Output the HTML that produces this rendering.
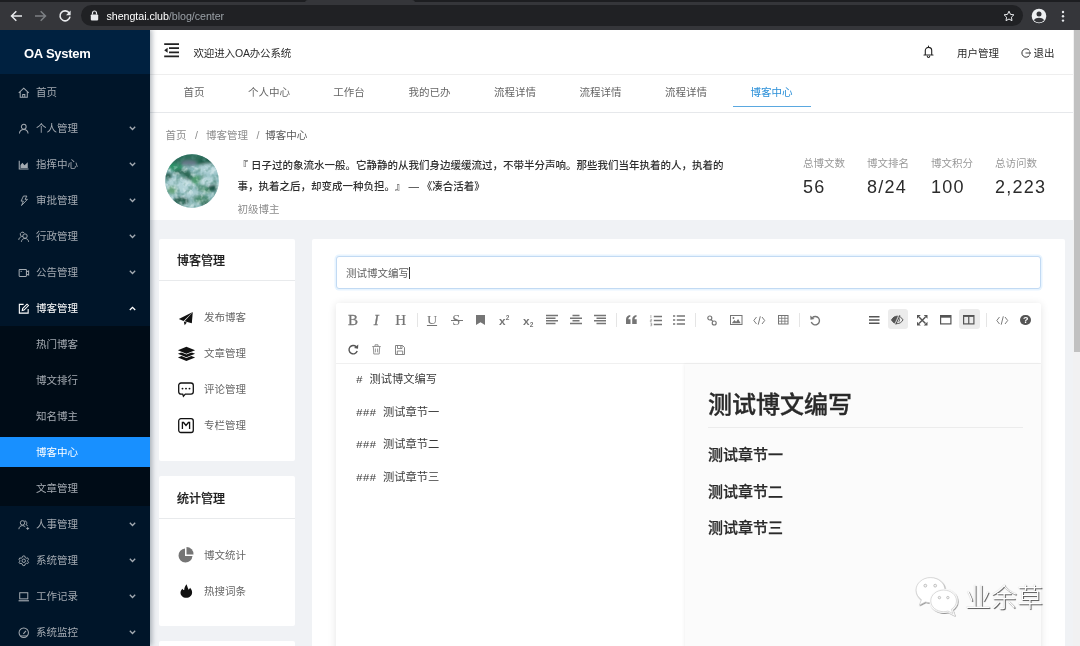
<!DOCTYPE html>
<html lang="zh-CN">
<head>
<meta charset="utf-8">
<title>OA System</title>
<style>
*{box-sizing:border-box;margin:0;padding:0}
html,body{width:1080px;height:646px;overflow:hidden;background:#f0f2f5}
body{font-family:"Liberation Sans","Noto Sans CJK SC",sans-serif;font-size:10.5px;color:#333;position:relative;text-spacing-trim:space-all}
#wrap{position:absolute;left:0;top:0;width:1080px;height:646px;overflow:hidden;will-change:transform}
.t{position:absolute;white-space:nowrap;line-height:16px;height:16px}
svg{position:absolute;overflow:visible}
#chrome{position:absolute;left:0;top:0;width:1080px;height:29.5px;z-index:20;background:#35363a}
#chrome .strip{position:absolute;left:0;top:0;width:1080px;height:2px;background:#1d1e21}
#urlbar{position:absolute;left:81px;top:5px;width:942px;height:21.2px;border-radius:10.6px;background:#202124}
#side{position:absolute;left:0;top:29px;width:150px;height:617px;background:#001529;box-shadow:2px 0 5px rgba(0,21,41,.3);z-index:5}
#logo{position:absolute;left:0;top:0;width:150px;height:45px;background:#002140}
#logo span{position:absolute;left:24px;top:15.8px;color:#fff;font-size:13px;font-weight:bold;line-height:18px;letter-spacing:-0.25px}
.mi{position:absolute;left:0;width:150px;height:36px;color:#a4abb2;line-height:36px}
.mi .lbl{position:absolute;left:36px;top:0.3px;white-space:nowrap}
.mi.on{color:#fff}
.sub{position:absolute;left:0;width:150px;background:#000c17}
.sel{position:absolute;left:0;width:150px;height:30px;background:#1890ff}
#head{position:absolute;left:150px;top:29px;width:923px;height:45px;background:#fff}
#tabs{position:absolute;left:150px;top:74px;width:923px;height:39px;background:#fff;border-top:1px solid #eeeeee;border-bottom:1px solid #e6e8eb;box-shadow:0 1px 1.5px rgba(0,0,0,.050)}
.tab{position:absolute;top:9px;color:#666;line-height:16px;transform:translateX(-50%);white-space:nowrap}
#ph{position:absolute;left:150px;top:113px;width:923px;height:107px;background:#fff}
.card{position:absolute;background:#fff;border-radius:2px}
</style>
</head>
<body>
<div id="wrap">
<div id="chrome"><div class="strip"></div><div style="position:absolute;left:305px;top:0;width:110px;height:3px;background:#35363a;border-radius:3px 3px 0 0"></div><div id="urlbar"></div>
<svg style="left:10px;top:10px" width="13" height="12" viewBox="0 0 13 12"><path d="M12 6H2M6.3 1.2L1.5 6l4.8 4.8" fill="none" stroke="#e8eaed" stroke-width="1.5"/></svg>
<svg style="left:34px;top:10px" width="13" height="12" viewBox="0 0 13 12"><path d="M1 6h10M6.7 1.2L11.5 6l-4.8 4.8" fill="none" stroke="#7d8084" stroke-width="1.5"/></svg>
<svg style="left:58px;top:9px" width="14" height="14" viewBox="0 0 14 14"><path d="M11.3 4.2A5 5 0 1 0 12 7.6" fill="none" stroke="#e8eaed" stroke-width="1.6"/><path d="M12.6 1.6v4.6H8z" fill="#e8eaed"/></svg>
<svg style="left:90px;top:10px" width="9" height="11" viewBox="0 0 9 11"><rect x="0.8" y="4.4" width="7.4" height="6" rx="0.8" fill="#e8eaed"/><path d="M2.5 4.6V3a2 2 0 0 1 4 0v1.6" fill="none" stroke="#e8eaed" stroke-width="1.2"/></svg>
<div class="t" style="left:106.5px;top:8px;font-size:10.7px;color:#fff;letter-spacing:-0.05px">shengtai.club<span style="color:#9aa0a6">/blog/center</span></div>
<svg style="left:1003px;top:10px" width="12" height="12" viewBox="0 0 12 12"><path d="M6 1.2l1.5 3.2 3.4.4-2.5 2.4.6 3.5L6 9l-3 1.7.6-3.5L1.1 4.8l3.4-.4z" fill="none" stroke="#e8eaed" stroke-width="1"/></svg>
<svg style="left:1031px;top:8px" width="16" height="16" viewBox="0 0 16 16"><circle cx="8" cy="8" r="7.3" fill="#eef0f2"/><circle cx="8" cy="6" r="2.5" fill="#35363a"/><path d="M2.9 12.2C4 10.4 6 9.7 8 9.7s4 .7 5.1 2.5A6.6 6.6 0 0 1 2.9 12.2z" fill="#35363a"/></svg>
<svg style="left:1061px;top:10px" width="4" height="13" viewBox="0 0 4 13"><circle cx="2" cy="2" r="1.2" fill="#e8eaed"/><circle cx="2" cy="6.3" r="1.2" fill="#e8eaed"/><circle cx="2" cy="10.6" r="1.2" fill="#e8eaed"/></svg>
</div>
<div id="side"><div id="logo"><span>OA System</span></div>
<div class="sub" style="top:297px;height:180px"></div>
<div class="sel" style="top:408px"></div>
<div class="mi" style="top:45px"><svg style="left:17.5px;top:12.5px" width="11.5" height="11.5" viewBox="0 0 12 12"><path d="M0.8 6.2L6 1.3l5.2 4.9M2.3 5v5.7h7.4V5M4.9 10.7V7.7h2.2v3" fill="none" stroke="currentColor" stroke-width="1.05"/></svg><span class="lbl">首页</span></div>
<div class="mi" style="top:81px"><svg style="left:17.5px;top:12.5px" width="11.5" height="11.5" viewBox="0 0 12 12"><circle cx="6" cy="3.9" r="2.5" fill="none" stroke="currentColor" stroke-width="1.05"/><path d="M1.5 11c.2-2.8 2-4.3 4.5-4.3s4.3 1.5 4.5 4.3" fill="none" stroke="currentColor" stroke-width="1.05"/></svg><span class="lbl">个人管理</span><svg style="left:129px;top:15.5px" width="7" height="5" viewBox="0 0 7 5"><path d="M0.8 0.8L3.5 3.5 6.2 0.8" fill="none" stroke="currentColor" stroke-width="1.3"/></svg></div>
<div class="mi" style="top:117px"><svg style="left:17.5px;top:12.5px" width="11.5" height="11.5" viewBox="0 0 12 12"><path d="M1.3 1.8v8.7h9.7" fill="none" stroke="currentColor" stroke-width="1.1"/><path d="M2.6 9.3V6.2l2-2.2 2.2 2.6 3.4-3.2v5.9z" fill="currentColor"/></svg><span class="lbl">指挥中心</span><svg style="left:129px;top:15.5px" width="7" height="5" viewBox="0 0 7 5"><path d="M0.8 0.8L3.5 3.5 6.2 0.8" fill="none" stroke="currentColor" stroke-width="1.3"/></svg></div>
<div class="mi" style="top:153px"><svg style="left:17.5px;top:12.5px" width="11.5" height="11.5" viewBox="0 0 12 12"><path d="M9.3 1.1H5.7L3.2 6.4h2.4L3.7 11 9.9 4.5H7.3z" fill="none" stroke="currentColor" stroke-width="0.95" stroke-linejoin="round"/></svg><span class="lbl">审批管理</span><svg style="left:129px;top:15.5px" width="7" height="5" viewBox="0 0 7 5"><path d="M0.8 0.8L3.5 3.5 6.2 0.8" fill="none" stroke="currentColor" stroke-width="1.3"/></svg></div>
<div class="mi" style="top:189px"><svg style="left:17.5px;top:12.5px" width="11.5" height="11.5" viewBox="0 0 12 12"><circle cx="7.3" cy="5.3" r="2.3" fill="none" stroke="currentColor" stroke-width="1"/><path d="M3.5 11.3c.2-2.2 1.7-3.5 3.8-3.5s3.6 1.3 3.8 3.5" fill="none" stroke="currentColor" stroke-width="1"/><path d="M5.3 5.7A2.3 2.3 0 1 1 6.6 2.2M0.8 9.3c.1-1.7 1-2.8 2.6-3.3" fill="none" stroke="currentColor" stroke-width="1"/></svg><span class="lbl">行政管理</span><svg style="left:129px;top:15.5px" width="7" height="5" viewBox="0 0 7 5"><path d="M0.8 0.8L3.5 3.5 6.2 0.8" fill="none" stroke="currentColor" stroke-width="1.3"/></svg></div>
<div class="mi" style="top:225px"><svg style="left:17.5px;top:12.5px" width="11.5" height="11.5" viewBox="0 0 12 12"><rect x="1.2" y="2.6" width="7.6" height="7.2" rx="0.6" fill="none" stroke="currentColor" stroke-width="1.05"/><path d="M8.8 5l2.3-.9v4.3L8.8 7.5" fill="none" stroke="currentColor" stroke-width="1.05"/><path d="M2.6 4.5h1.6" stroke="currentColor" stroke-width="0.9"/></svg><span class="lbl">公告管理</span><svg style="left:129px;top:15.5px" width="7" height="5" viewBox="0 0 7 5"><path d="M0.8 0.8L3.5 3.5 6.2 0.8" fill="none" stroke="currentColor" stroke-width="1.3"/></svg></div>
<div class="mi on" style="top:261px"><svg style="left:17.5px;top:12.5px" width="11.5" height="11.5" viewBox="0 0 12 12"><path d="M10.6 6.3v4.3H1.4V1.4h4.5" fill="none" stroke="currentColor" stroke-width="1.15"/><path d="M4.4 7.8l.4-2 4.6-4.6 1.5 1.5-4.6 4.6z" fill="none" stroke="currentColor" stroke-width="1.05"/></svg><span class="lbl">博客管理</span><svg style="left:129px;top:15.5px" width="7" height="5" viewBox="0 0 7 5"><path d="M0.8 4L3.5 1.3 6.2 4" fill="none" stroke="currentColor" stroke-width="1.3"/></svg></div>
<div class="mi" style="top:297px"><span class="lbl">热门博客</span></div>
<div class="mi" style="top:333px"><span class="lbl">博文排行</span></div>
<div class="mi" style="top:369px"><span class="lbl">知名博主</span></div>
<div class="mi on" style="top:405px"><span class="lbl">博客中心</span></div>
<div class="mi" style="top:441px"><span class="lbl">文章管理</span></div>
<div class="mi" style="top:477px"><svg style="left:17.5px;top:12.5px" width="11.5" height="11.5" viewBox="0 0 12 12"><circle cx="4.7" cy="4" r="2.3" fill="none" stroke="currentColor" stroke-width="1"/><path d="M0.9 10.6c.2-2.3 1.7-3.7 3.8-3.7 1.2 0 2.2.4 2.9 1.2" fill="none" stroke="currentColor" stroke-width="1"/><path d="M7 1.9a2.3 2.3 0 0 1 1.3 4.1c.8.2 1.4.6 1.9 1.2M8.6 9.9h3M10.1 8.4v3" fill="none" stroke="currentColor" stroke-width="0.95"/></svg><span class="lbl">人事管理</span><svg style="left:129px;top:15.5px" width="7" height="5" viewBox="0 0 7 5"><path d="M0.8 0.8L3.5 3.5 6.2 0.8" fill="none" stroke="currentColor" stroke-width="1.3"/></svg></div>
<div class="mi" style="top:513px"><svg style="left:17.5px;top:12.5px" width="11.5" height="11.5" viewBox="0 0 12 12"><circle cx="6" cy="6" r="1.8" fill="none" stroke="currentColor" stroke-width="1"/><path d="M6 .9l1.3.5.3 1.3 1.2.7 1.3-.4.9 1.5-.9 1 0 1 .9 1-.9 1.5-1.3-.4-1.2.7-.3 1.3L6 11.1l-1.3-.5-.3-1.3-1.2-.7-1.3.4L1 7.5l.9-1 0-1L1 4.5l.9-1.5 1.3.4 1.2-.7.3-1.3z" fill="none" stroke="currentColor" stroke-width="1" stroke-linejoin="round"/></svg><span class="lbl">系统管理</span><svg style="left:129px;top:15.5px" width="7" height="5" viewBox="0 0 7 5"><path d="M0.8 0.8L3.5 3.5 6.2 0.8" fill="none" stroke="currentColor" stroke-width="1.3"/></svg></div>
<div class="mi" style="top:549px"><svg style="left:17.5px;top:12.5px" width="11.5" height="11.5" viewBox="0 0 12 12"><rect x="1.8" y="1.8" width="8.4" height="6.4" fill="none" stroke="currentColor" stroke-width="1.05"/><path d="M0.6 10.2h10.8" stroke="currentColor" stroke-width="1.2"/></svg><span class="lbl">工作记录</span><svg style="left:129px;top:15.5px" width="7" height="5" viewBox="0 0 7 5"><path d="M0.8 0.8L3.5 3.5 6.2 0.8" fill="none" stroke="currentColor" stroke-width="1.3"/></svg></div>
<div class="mi" style="top:585px"><svg style="left:17.5px;top:12.5px" width="11.5" height="11.5" viewBox="0 0 12 12"><circle cx="6" cy="6" r="4.9" fill="none" stroke="currentColor" stroke-width="1.05"/><path d="M5.6 7.2L8.3 4" stroke="currentColor" stroke-width="1.1"/><path d="M2.6 9.3h6.8" stroke="currentColor" stroke-width="0.9"/></svg><span class="lbl">系统监控</span><svg style="left:129px;top:15.5px" width="7" height="5" viewBox="0 0 7 5"><path d="M0.8 0.8L3.5 3.5 6.2 0.8" fill="none" stroke="currentColor" stroke-width="1.3"/></svg></div>
</div>
<div id="head">
<svg style="left:14px;top:14px" width="16" height="15" viewBox="0 0 16 15"><path d="M0.2 1.1h14.8M5 5.1h10M5 9.3h10M0.2 13.4h14.8" stroke="#222" stroke-width="1.65"/><path d="M0.2 7.2L3.6 4.7v5z" fill="#222"/></svg>
<div class="t" style="left:43.5px;top:15.5px;color:#2b2b2b;letter-spacing:-0.15px">欢迎进入OA办公系统</div>
<svg style="left:772.5px;top:16px" width="11" height="13" viewBox="0 0 11 13"><path d="M1 10h9M2.3 10V5.6a3.2 3.2 0 0 1 6.4 0V10M5.5 2.3V1M4.3 11.3a1.2 1.2 0 0 0 2.4 0" fill="none" stroke="#222" stroke-width="1.1" stroke-linecap="round"/></svg>
<div class="t" style="left:807px;top:15.5px;color:#2b2b2b">用户管理</div>
<svg style="left:870.5px;top:18.5px" width="10" height="10" viewBox="0 0 10 10"><path d="M8.4 2.4A4.2 4.2 0 1 0 8.4 7.6" fill="none" stroke="#333" stroke-width="1"/><path d="M4.5 5h5M8 3.5L9.6 5 8 6.5" fill="none" stroke="#333" stroke-width="0.9"/></svg>
<div class="t" style="left:883.5px;top:15.5px;color:#2b2b2b">退出</div>
</div>
<div id="tabs">
<div class="tab" style="left:44px">首页</div>
<div class="tab" style="left:119px">个人中心</div>
<div class="tab" style="left:199px">工作台</div>
<div class="tab" style="left:279.5px">我的已办</div>
<div class="tab" style="left:365px">流程详情</div>
<div class="tab" style="left:450.5px">流程详情</div>
<div class="tab" style="left:536px">流程详情</div>
<div class="tab" style="left:621.5px;color:#2a8fd8">博客中心</div>
<div style="position:absolute;left:583px;top:30.8px;width:77.5px;height:1.2px;background:#5aa8e0"></div>
</div>
<div id="ph">
<div class="t" style="left:15.5px;top:14px;color:#8c8c8c">首页<span style="margin:0 8px 0 8.5px;color:#8c8c8c">/</span>博客管理<span style="margin:0 6px 0 8.5px;color:#8c8c8c">/</span><span style="color:#595959">博客中心</span></div>
<svg style="left:15.2px;top:41.2px" width="54" height="54" viewBox="0 0 54 54"><defs><clipPath id="avc"><circle cx="27" cy="27" r="26.8"/></clipPath><filter id="avb" x="-10%" y="-10%" width="120%" height="120%"><feGaussianBlur stdDeviation="1.7"/></filter><filter id="avn" x="0" y="0" width="100%" height="100%"><feTurbulence type="fractalNoise" baseFrequency="0.22" numOctaves="2" seed="4" result="n"/><feColorMatrix in="n" type="matrix" values="0 0 0 0 0.86  0 0 0 0 0.95  0 0 0 0 0.96  2.6 0 0 0 -1.15"/></filter><filter id="avd" x="0" y="0" width="100%" height="100%"><feTurbulence type="fractalNoise" baseFrequency="0.19" numOctaves="2" seed="33" result="n"/><feColorMatrix in="n" type="matrix" values="0 0 0 0 0.08  0 0 0 0 0.26  0 0 0 0 0.21  0 2.8 0 0 -1.35"/></filter></defs><g clip-path="url(#avc)"><rect width="54" height="54" fill="#8fbcc0"/><g filter="url(#avb)"><rect x="-4" y="-4" width="62" height="15" fill="#2f6e5b"/><ellipse cx="10" cy="13" rx="8" ry="3.5" fill="#2c9468"/><ellipse cx="24" cy="9" rx="8" ry="2.8" fill="#667888"/><ellipse cx="40" cy="7" rx="7" ry="3" fill="#1f5a48"/><ellipse cx="44" cy="15" rx="11" ry="5.5" fill="#aed0d6"/><ellipse cx="3" cy="22" rx="3.5" ry="3" fill="#23564a"/><ellipse cx="17" cy="18" rx="9" ry="3" fill="#35705e"/><ellipse cx="23" cy="24" rx="5.5" ry="5" fill="#2c6653"/><ellipse cx="31" cy="26" rx="6" ry="4" fill="#4f9c70" transform="rotate(-25 31 26)"/><ellipse cx="15" cy="31" rx="13" ry="7" fill="#b2d3d8"/><ellipse cx="43" cy="27" rx="8" ry="4.5" fill="#b6d6da"/><ellipse cx="39" cy="35" rx="8" ry="3.5" fill="#4c8f70" transform="rotate(20 39 35)"/><ellipse cx="48" cy="34" rx="5" ry="3.5" fill="#1f5546"/><ellipse cx="7" cy="36" rx="5" ry="4" fill="#6aa67e"/><ellipse cx="27" cy="40" rx="11" ry="4.5" fill="#a9ccd0"/><ellipse cx="16" cy="47" rx="8" ry="4" fill="#245a49"/><ellipse cx="36" cy="45" rx="8" ry="4" fill="#4b8c6e"/><ellipse cx="27" cy="51" rx="6" ry="3" fill="#9bc4c4"/><ellipse cx="42" cy="50" rx="6" ry="3" fill="#2d6552"/></g><rect y="12" width="54" height="42" filter="url(#avn)" opacity="0.55"/><rect width="54" height="54" filter="url(#avd)" opacity="0.7"/></g></svg>
<div class="t" style="left:87.5px;top:43.5px;font-weight:500;color:#2e2e2e">『 日子过的象流水一般。它静静的从我们身边缓缓流过，不带半分声响。那些我们当年执着的人，执着的</div>
<div class="t" style="left:87.5px;top:64.5px;font-weight:500;color:#2e2e2e">事，执着之后，却变成一种负担。』 — 《凑合活着》</div>
<div class="t" style="left:87.5px;top:88px;color:#8c8c8c">初级博主</div>
<div class="t" style="left:653px;top:41.5px;color:#999">总博文数</div>
<div class="t" style="left:653px;top:62px;height:24px;line-height:24px;font-size:18px;letter-spacing:1.25px;color:#2b2b2b">56</div>
<div class="t" style="left:717px;top:41.5px;color:#999">博文排名</div>
<div class="t" style="left:717px;top:62px;height:24px;line-height:24px;font-size:18px;letter-spacing:1.25px;color:#2b2b2b">8/24</div>
<div class="t" style="left:781px;top:41.5px;color:#999">博文积分</div>
<div class="t" style="left:781px;top:62px;height:24px;line-height:24px;font-size:18px;letter-spacing:1.25px;color:#2b2b2b">100</div>
<div class="t" style="left:845px;top:41.5px;color:#999">总访问数</div>
<div class="t" style="left:845px;top:62px;height:24px;line-height:24px;font-size:18px;letter-spacing:1.25px;color:#2b2b2b">2,223</div>
</div>
<div class="card" style="left:159px;top:239px;width:136px;height:222px">
<div class="t" style="left:18px;top:14px;font-size:12px;font-weight:500;color:#1f1f1f;-webkit-text-stroke:0.2px #1f1f1f">博客管理</div>
<div style="position:absolute;left:0;top:41.3px;width:136px;height:1px;background:#e8eaec"></div>
<svg style="left:19px;top:72px" width="17" height="15" viewBox="0 0 17 15"><path d="M14.8 0.9L0.8 7.9 5.5 9.9z" fill="#111"/><path d="M14.8 0.9L6.6 10.3 13.8 12.2z" fill="#111"/><path d="M5.8 10.6L6.7 14.3 8.8 11.6z" fill="#111"/></svg>
<div class="t" style="left:45px;top:70px;color:#666">发布博客</div>
<svg style="left:18px;top:107px" width="18" height="16.5" viewBox="0 0 18 16.5"><path d="M9.4 8L18.1 11.4 9.4 14.9 0.9 11.4z" fill="#111"/><path d="M9.4 4.4L18.1 7.8 9.4 11.3 0.9 7.8z" fill="#111" stroke="#fff" stroke-width="1.3" paint-order="stroke"/><path d="M9.4 0.8L18.1 4.2 9.4 7.7 0.9 4.2z" fill="#111" stroke="#fff" stroke-width="1.3" paint-order="stroke"/></svg>
<div class="t" style="left:45px;top:106px;color:#666">文章管理</div>
<svg style="left:19px;top:143px" width="16" height="15" viewBox="0 0 16 15"><path d="M3 1h10a2.3 2.3 0 0 1 2.3 2.3v6.5A2.3 2.3 0 0 1 13 12.1H7.3L5.4 14.2 4.7 12.1H3A2.3 2.3 0 0 1 .7 9.8V3.3A2.3 2.3 0 0 1 3 1z" fill="none" stroke="#111" stroke-width="1.3"/><circle cx="4.5" cy="6.6" r="0.95" fill="#111"/><circle cx="8" cy="6.6" r="0.95" fill="#111"/><circle cx="11.5" cy="6.6" r="0.95" fill="#111"/></svg>
<div class="t" style="left:45px;top:142px;color:#666">评论管理</div>
<svg style="left:19px;top:179px" width="16" height="15.2" viewBox="0 0 16 15.2"><rect x="0.7" y="0.7" width="14.6" height="13.8" rx="2.2" fill="none" stroke="#111" stroke-width="1.3"/><path d="M4.4 11V4.5h1.2L8 7.5l2.4-3h1.2V11" fill="none" stroke="#111" stroke-width="1.3" stroke-linejoin="miter"/></svg>
<div class="t" style="left:45px;top:178px;color:#666">专栏管理</div>
</div>
<div class="card" style="left:159px;top:476px;width:136px;height:150px">
<div class="t" style="left:18px;top:14.7px;font-size:12px;font-weight:500;color:#1f1f1f;-webkit-text-stroke:0.2px #1f1f1f">统计管理</div>
<div style="position:absolute;left:0;top:42px;width:136px;height:1px;background:#e8eaec"></div>
<svg style="left:19px;top:71.4px" width="16" height="16" viewBox="0 0 16 16"><path d="M7 1.5A7 7 0 1 0 14.5 9H7z" fill="#757575"/><path d="M8.5 0A7 7 0 0 1 15.5 7.5H8.5z" fill="#757575"/></svg>
<div class="t" style="left:45px;top:70.5px;color:#666">博文统计</div>
<svg style="left:19.5px;top:107.5px" width="13.5" height="14.5" viewBox="0 0 13.5 14.5"><path d="M7.6 0.2C8.2 2.5 9 4 9.6 5.7c.7-.5 1.2-1.2 1.5-2 1.3 1.5 2 3.1 2 4.8 0 3.1-2.6 5.3-5.9 5.3-3.2 0-5.7-2.1-5.7-5 0-1.8.9-3.2 2-4.1.3.8.8 1.2 1.7 1.3 0-2.2 1-4.2 2.4-5.8z" fill="#111"/></svg>
<div class="t" style="left:45px;top:106.5px;color:#666">热搜词条</div>
</div>
<div class="card" style="left:159px;top:641px;width:136px;height:20px"></div>
<div class="card" style="left:312px;top:239px;width:753px;height:420px">
<div style="position:absolute;left:24px;top:17.3px;width:705px;height:33px;border:1px solid #c2daf3;border-radius:3px;box-shadow:0 0 0 1.5px rgba(24,144,255,.100);background:#fff"></div>
<div class="t" style="left:34px;top:26px;color:#606060">测试博文编写</div>
<div style="position:absolute;left:96.5px;top:28px;width:1px;height:12px;background:#333"></div>
<div id="ed" style="position:absolute;left:24px;top:64px;width:705px;height:360px;background:#fff;box-shadow:0 1px 8px rgba(0,0,0,.11);border-radius:3px">
<div style="position:absolute;left:0;top:0;width:705px;height:61px;border-bottom:1px solid #f0f0f0;background:#fff;border-radius:3px 3px 0 0"></div>
<div style="position:absolute;left:0;top:61px;width:349px;height:300px;background:#fff"></div>
<div style="position:absolute;left:349px;top:61px;width:356px;height:300px;background:#fbfbfb;box-shadow:-1px 0 3px rgba(0,0,0,.05)"></div>
<div class="t" style="left:2px;top:6.7px;width:30px;height:20px;line-height:20px;text-align:center;font-family:'Liberation Serif',serif;color:#757575;font-size:15px;font-weight:normal;-webkit-text-stroke:0.3px #757575">B</div>
<div class="t" style="left:25.3px;top:6.7px;width:30px;height:20px;line-height:20px;text-align:center;font-family:'Liberation Serif',serif;color:#757575;font-size:15px;font-style:italic;-webkit-text-stroke:0.3px #757575">I</div>
<div class="t" style="left:49.7px;top:6.7px;width:30px;height:20px;line-height:20px;text-align:center;font-family:'Liberation Serif',serif;color:#757575;font-size:15px;-webkit-text-stroke:0.2px #757575">H</div>
<div style="position:absolute;left:81px;top:9.5px;width:1px;height:14.5px;background:#e5e5e5"></div>
<div class="t" style="left:81.3px;top:6.7px;width:30px;height:20px;line-height:20px;text-align:center;font-family:'Liberation Serif',serif;color:#757575;font-size:12.8px;text-decoration:underline;text-underline-offset:1.2px;text-decoration-thickness:1px;transform:scaleX(1.1)">U</div>
<div class="t" style="left:105.4px;top:7.2px;width:30px;height:20px;line-height:20px;text-align:center;font-family:'Liberation Serif',serif;color:#757575;font-size:14.5px">S</div>
<div style="position:absolute;left:114.5px;top:16.8px;width:12px;height:1.1px;background:#757575"></div>
<svg style="left:139.7px;top:12.2px" width="9" height="10" viewBox="0 0 9 10"><path d="M0 0h9v10L4.5 7.3 0 10z" fill="#757575"/></svg>
<div class="t" style="left:163px;top:8.5px;font-size:11.8px;font-weight:bold;color:#757575;line-height:18px;height:18px">x<span style="font-size:6.5px;position:relative;top:-4.3px;left:0.3px">2</span></div>
<div class="t" style="left:187px;top:8.5px;font-size:11.8px;font-weight:bold;color:#757575;line-height:18px;height:18px">x<span style="font-size:6.5px;position:relative;top:2.3px;left:0.3px">2</span></div>
<svg style="left:209.7px;top:12.3px" width="12" height="9" viewBox="0 0 12 9"><path d="M0 .6h12M0 3.2h9.5M0 5.8h12M0 8.4h9.5" stroke="#757575" stroke-width="1.5"/></svg>
<svg style="left:233.7px;top:12.3px" width="12" height="9" viewBox="0 0 12 9"><path d="M2.5 .6h7M0 3.2h12M2.5 5.8h7M0 8.4h12" stroke="#757575" stroke-width="1.5"/></svg>
<svg style="left:257.7px;top:12.3px" width="12" height="9" viewBox="0 0 12 9"><path d="M0 .6h12M2.5 3.2h9.5M0 5.8h12M2.5 8.4h9.5" stroke="#757575" stroke-width="1.5"/></svg>
<div style="position:absolute;left:280px;top:9.5px;width:1px;height:14.5px;background:#e5e5e5"></div>
<svg style="left:290.2px;top:11.9px" width="11" height="9" viewBox="0 0 11 9"><path d="M0 9V4.5C0 2 1.5 .3 4.3 0v1.8C3 2.1 2.4 3 2.4 4.3h2.1V9zM6.2 9V4.5C6.2 2 7.7 .3 10.5 0v1.8C9.2 2.1 8.6 3 8.6 4.3h2.1V9z" fill="#757575"/></svg>
<svg style="left:313.6px;top:11.5px" width="12" height="11" viewBox="0 0 12 11"><path d="M3.8 1.5H12M3.8 5.5H12M3.8 9.5H12" stroke="#757575" stroke-width="1.3"/><path d="M.9 0v3M.3 4.3h1.3v1.2H.3v1.2h1.4M.3 8.2h1.4v2.6H.3M.7 9.5h1" fill="none" stroke="#757575" stroke-width="0.55"/></svg>
<svg style="left:337.4px;top:12px" width="12" height="10" viewBox="0 0 12 10"><path d="M3.8 1H12M3.8 5H12M3.8 9H12" stroke="#757575" stroke-width="1.3"/><path d="M0 1h2.2M0 5h2.2M0 9h2.2" stroke="#757575" stroke-width="1.7"/></svg>
<div style="position:absolute;left:358.7px;top:9.5px;width:1px;height:14.5px;background:#e5e5e5"></div>
<svg style="left:370.5px;top:11.5px" width="10" height="11" viewBox="0 0 10 11"><circle cx="2.8" cy="3" r="2" fill="none" stroke="#757575" stroke-width="1.15"/><circle cx="7.2" cy="8" r="2" fill="none" stroke="#757575" stroke-width="1.15"/><path d="M3.9 4.3l2.2 2.4" stroke="#757575" stroke-width="1.15"/></svg>
<svg style="left:393.55px;top:12px" width="12.5" height="10" viewBox="0 0 12.5 10"><rect x=".5" y=".5" width="11.5" height="9" fill="none" stroke="#757575" stroke-width="1"/><path d="M1.8 8.2l2.6-3.2 1.7 1.7 2-2.7 2.6 4.2z" fill="#757575"/><circle cx="3.5" cy="3" r="0.9" fill="#757575"/></svg>
<svg style="left:417.25px;top:12.5px" width="12.5" height="9" viewBox="0 0 12.5 9"><path d="M3.5 1L.8 4.5l2.7 3.5M9 1l2.7 3.5L9 8M7.3 .3L5.2 8.7" fill="none" stroke="#757575" stroke-width="0.95"/></svg>
<svg style="left:441.75px;top:12.25px" width="10.5" height="9.5" viewBox="0 0 10.5 9.5"><rect x=".5" y=".5" width="9.5" height="8.5" fill="none" stroke="#757575" stroke-width="1"/><path d="M.5 3.3h9.5M.5 6.2h9.5M3.7 .5v8.5M6.9 .5v8.5" stroke="#757575" stroke-width="0.8"/></svg>
<div style="position:absolute;left:462.8px;top:9.5px;width:1px;height:14.5px;background:#e5e5e5"></div>
<svg style="left:473.75px;top:11.75px" width="10.5" height="10.5" viewBox="0 0 10.5 10.5"><path d="M2.3 2.7A4.2 4.2 0 1 1 1.3 7.1" fill="none" stroke="#757575" stroke-width="1.4"/><path d="M.2 .6l.3 4.2 4-.9z" fill="#757575"/></svg>
<svg style="left:532.75px;top:13.2px" width="10.5" height="8" viewBox="0 0 10.5 8"><path d="M0 .7h10.5M0 4h10.5M0 7.3h10.5" stroke="#555" stroke-width="1.4"/></svg>
<div style="position:absolute;left:551.7px;top:6.2px;width:20px;height:20px;border-radius:3px;background:#ececec"></div>
<svg style="left:555.45px;top:12.25px" width="12.5" height="9.5" viewBox="0 0 12.5 9.5"><defs><clipPath id="eyl"><path d="M-1 -1H8.2L3.6 10.5H-1z"/></clipPath></defs><path d="M.5 4.9C2 2.3 4 1.2 6.2 1.2s4.3 1.1 5.8 3.7C10.5 7.5 8.5 8.6 6.2 8.6S2 7.5.5 4.9z" fill="none" stroke="#555" stroke-width="1"/><path d="M.5 4.9C2 2.3 4 1.2 6.2 1.2s4.3 1.1 5.8 3.7C10.5 7.5 8.5 8.6 6.2 8.6S2 7.5.5 4.9z" fill="#555" clip-path="url(#eyl)"/><path d="M7.6 2.9a2.5 2.5 0 0 1 0 4" fill="none" stroke="#555" stroke-width="0.8"/><path d="M8.9 .2L4.7 9.4" stroke="#555" stroke-width="1.1"/><path d="M7.8 .2L3.6 9.4" stroke="#ececec" stroke-width="0.7"/></svg>
<svg style="left:580.55px;top:11.75px" width="10.5" height="10.5" viewBox="0 0 10.5 10.5"><path d="M2 2l6.5 6.5M8.5 2L2 8.5" stroke="#555" stroke-width="1.5"/><path d="M0 0h3.8L0 3.8zM10.5 0v3.8L6.7 0zM0 10.5V6.7l3.8 3.8zM10.5 10.5H6.7l3.8-3.8z" fill="#555"/></svg>
<svg style="left:603.55px;top:12.45px" width="11.5" height="9.5" viewBox="0 0 11.5 9.5"><rect x=".6" y=".6" width="10.3" height="8.3" fill="none" stroke="#555" stroke-width="1.2"/><path d="M.6 1.6h10.3" stroke="#555" stroke-width="2.2"/></svg>
<div style="position:absolute;left:622.5px;top:6.2px;width:21px;height:20px;border-radius:3px;background:#ececec"></div>
<svg style="left:627.25px;top:12.45px" width="11.5" height="9.5" viewBox="0 0 11.5 9.5"><rect x=".6" y=".6" width="10.3" height="8.3" fill="none" stroke="#555" stroke-width="1.2"/><path d="M.6 1.1h10.3" stroke="#555" stroke-width="1.6"/><path d="M5.75 1v8" stroke="#555" stroke-width="1.2"/></svg>
<div style="position:absolute;left:650px;top:9.5px;width:1px;height:14.5px;background:#e5e5e5"></div>
<svg style="left:659.75px;top:12.5px" width="12.5" height="9" viewBox="0 0 12.5 9"><path d="M3.5 1L.8 4.5l2.7 3.5M9 1l2.7 3.5L9 8M7.3 .3L5.2 8.7" fill="none" stroke="#757575" stroke-width="0.95"/></svg>
<div style="position:absolute;left:684.3px;top:11.699999999999989px;width:10.8px;height:10.8px;border-radius:50%;background:#555;color:#fff;font-size:9px;font-weight:bold;line-height:10.8px;text-align:center">?</div>
<svg style="left:11.75px;top:41.25px" width="10.5" height="10.5" viewBox="0 0 10.5 10.5"><path d="M8.2 2.7A4.2 4.2 0 1 0 9.2 7.1" fill="none" stroke="#555" stroke-width="1.4"/><path d="M10.3 .6l-.3 4.2-4-.9z" fill="#555"/></svg>
<svg style="left:36.3px;top:41.25px" width="9" height="10.5" viewBox="0 0 9 10.5"><path d="M.3 2.5h8.4M3 2.3V.8h3v1.5M1.3 2.7l.5 7.3h5.4l.5-7.3M3.4 4.5v3.8M5.6 4.5v3.8" fill="none" stroke="#888" stroke-width="0.9"/></svg>
<svg style="left:59.3px;top:41.5px" width="10" height="10" viewBox="0 0 10 10"><path d="M.5 .5h7l2 2v7h-9z" fill="none" stroke="#777" stroke-width="0.9"/><path d="M2.5 .5v3h4.5V.5M2.3 9.5V6h5.4v3.5M5.5 1.3v1.4" fill="none" stroke="#777" stroke-width="0.85"/></svg>
<div class="t" style="left:20px;top:68.7px;font-family:'Liberation Mono','Noto Sans CJK SC',monospace;font-size:11.25px;color:#3a3a3a;white-space:pre"># 测试博文编写</div>
<div class="t" style="left:20px;top:101.5px;font-family:'Liberation Mono','Noto Sans CJK SC',monospace;font-size:11.25px;color:#3a3a3a;white-space:pre">### 测试章节一</div>
<div class="t" style="left:20px;top:134.3px;font-family:'Liberation Mono','Noto Sans CJK SC',monospace;font-size:11.25px;color:#3a3a3a;white-space:pre">### 测试章节二</div>
<div class="t" style="left:20px;top:167.2px;font-family:'Liberation Mono','Noto Sans CJK SC',monospace;font-size:11.25px;color:#3a3a3a;white-space:pre">### 测试章节三</div>
<div class="t" style="left:372px;top:85.5px;height:32px;line-height:32px;font-size:24px;font-weight:500;color:#2a2a2a;-webkit-text-stroke:0.35px #2a2a2a">测试博文编写</div>
<div style="position:absolute;left:372px;top:123.5px;width:315px;height:1px;background:#ececec"></div>
<div class="t" style="left:372px;top:141px;height:22px;line-height:22px;font-size:15px;font-weight:500;color:#2a2a2a;-webkit-text-stroke:0.25px #2a2a2a">测试章节一</div>
<div class="t" style="left:372px;top:177.5px;height:22px;line-height:22px;font-size:15px;font-weight:500;color:#2a2a2a;-webkit-text-stroke:0.25px #2a2a2a">测试章节二</div>
<div class="t" style="left:372px;top:214px;height:22px;line-height:22px;font-size:15px;font-weight:500;color:#2a2a2a;-webkit-text-stroke:0.25px #2a2a2a">测试章节三</div>
</div>
</div>
<svg style="left:915px;top:576.3px;z-index:8" width="43.2" height="38.5" viewBox="0 0 46 41"><defs><filter id="wsh" x="-20%" y="-20%" width="140%" height="140%"><feDropShadow dx="0.7" dy="0.8" stdDeviation="0.6" flood-color="#000" flood-opacity="0.55"/></filter></defs><g filter="url(#wsh)"><path d="M16.5 1.7C8 1.7 1.1 7.7 1.1 15c0 4.1 2.2 7.8 5.7 10.2L4.7 31l6.3-3.4c1.7.5 3.6.8 5.5.8 8.5 0 15.4-6 15.4-13.4S25 1.7 16.5 1.7z" fill="#fff" stroke="#b5b5b5" stroke-width="0.5"/><path d="M30.5 15c-7.6 0-13.7 5.1-13.7 11.5S22.9 38 30.5 38c1.6 0 3.2-.2 4.6-.7l5.2 2.7-1.6-4.5c3.4-2.1 5.5-5.4 5.5-9 0-6.4-6.1-11.5-13.7-11.5z" fill="#fff" stroke="#fbfbfb" stroke-width="2.6"/><path d="M30.5 15c-7.6 0-13.7 5.1-13.7 11.5S22.9 38 30.5 38c1.6 0 3.2-.2 4.6-.7l5.2 2.7-1.6-4.5c3.4-2.1 5.5-5.4 5.5-9 0-6.4-6.1-11.5-13.7-11.5z" fill="#fff" stroke="#b5b5b5" stroke-width="0.5"/></g><g fill="#f4f4f4" stroke="#a8a8a8" stroke-width="0.7"><circle cx="11" cy="10.3" r="1.5"/><circle cx="21.5" cy="10.3" r="1.5"/><circle cx="26" cy="23" r="1.3"/><circle cx="35" cy="23" r="1.3"/></g></svg>
<div class="t" style="left:965px;top:580px;height:36px;line-height:36px;font-size:26px;font-weight:300;color:#fff;text-shadow:1px 1px 0.7px rgba(0,0,0,.650),0 0 1px rgba(0,0,0,.250);z-index:8">业余草</div>
<div style="position:absolute;left:1073px;top:30px;width:7px;height:616px;background:#f1f1f2;z-index:9"></div>
<div style="position:absolute;left:1073.5px;top:30px;width:6.5px;height:322px;background:#c1c1c1;z-index:10"></div>
</div>
</body>
</html>
